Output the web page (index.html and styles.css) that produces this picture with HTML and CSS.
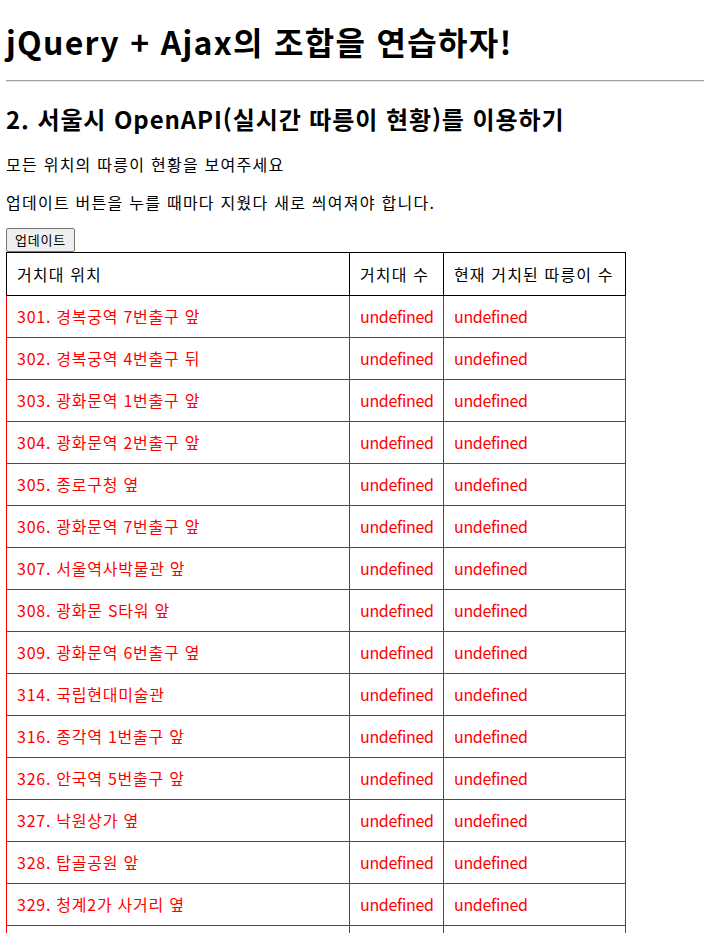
FILE: index.html
```html
<!DOCTYPE html>
<html lang="ko">
<head>
<meta charset="utf-8">
<title>jQuery + Ajax</title>
<link rel="stylesheet" href="styles.css">
</head>
<body>
<h1 class="title">jQuery + Ajax의 조합을 연습하자!</h1>
<hr class="rule">
<h2 class="subtitle">2. 서울시 OpenAPI(실시간 따릉이 현황)를 이용하기</h2>
<p class="desc first">모든 위치의 따릉이 현황을 보여주세요</p>
<p class="desc">업데이트 버튼을 누를 때마다 지웠다 새로 씌여져야 합니다.</p>
<button class="update-btn">업데이트</button>
<table class="bike-table">
  <colgroup>
    <col class="c1"><col class="c2"><col class="c3">
  </colgroup>
  <thead>
    <tr><th>거치대 위치</th><th>거치대 수</th><th>현재 거치된 따릉이 수</th></tr>
  </thead>
  <tbody>
    <tr><td class="loc">301. 경복궁역 7번출구 앞</td><td class="num">undefined</td><td class="num">undefined</td></tr>
    <tr><td class="loc">302. 경복궁역 4번출구 뒤</td><td class="num">undefined</td><td class="num">undefined</td></tr>
    <tr><td class="loc">303. 광화문역 1번출구 앞</td><td class="num">undefined</td><td class="num">undefined</td></tr>
    <tr><td class="loc">304. 광화문역 2번출구 앞</td><td class="num">undefined</td><td class="num">undefined</td></tr>
    <tr><td class="loc">305. 종로구청 옆</td><td class="num">undefined</td><td class="num">undefined</td></tr>
    <tr><td class="loc">306. 광화문역 7번출구 앞</td><td class="num">undefined</td><td class="num">undefined</td></tr>
    <tr><td class="loc">307. 서울역사박물관 앞</td><td class="num">undefined</td><td class="num">undefined</td></tr>
    <tr><td class="loc">308. 광화문 S타워 앞</td><td class="num">undefined</td><td class="num">undefined</td></tr>
    <tr><td class="loc">309. 광화문역 6번출구 옆</td><td class="num">undefined</td><td class="num">undefined</td></tr>
    <tr><td class="loc">314. 국립현대미술관</td><td class="num">undefined</td><td class="num">undefined</td></tr>
    <tr><td class="loc">316. 종각역 1번출구 앞</td><td class="num">undefined</td><td class="num">undefined</td></tr>
    <tr><td class="loc">326. 안국역 5번출구 앞</td><td class="num">undefined</td><td class="num">undefined</td></tr>
    <tr><td class="loc">327. 낙원상가 옆</td><td class="num">undefined</td><td class="num">undefined</td></tr>
    <tr><td class="loc">328. 탑골공원 앞</td><td class="num">undefined</td><td class="num">undefined</td></tr>
    <tr><td class="loc">329. 청계2가 사거리 옆</td><td class="num">undefined</td><td class="num">undefined</td></tr>
    <tr><td class="loc">&nbsp;</td><td class="num">&nbsp;</td><td class="num">&nbsp;</td></tr>
  </tbody>
</table>
</body>
</html>
```
FILE: styles.css
```css
html, body {
  margin: 0;
  padding: 0;
  background: #fff;
}
body {
  padding-left: 6px;
  font-family: "Noto Sans CJK KR", "Noto Sans", sans-serif;
  color: #000;
}
.title {
  margin: 20px 0 0;
  font-size: 32px;
  line-height: 42px;
  font-weight: 700;
  letter-spacing: 1.3px;
}
.rule {
  margin: 18px 0 0;
  height: 0;
  border: 0;
  border-top: 1px solid #a0a0a0;
  border-bottom: 1px solid #e6e6e6;
}
.subtitle {
  margin: 21px 0 0;
  font-size: 24px;
  line-height: 32px;
  font-weight: 700;
  letter-spacing: 0.9px;
}
.desc {
  margin: 14px 0 0;
  font-size: 16px;
  line-height: 24px;
  letter-spacing: 1.25px;
}
.desc.first {
  margin-top: 17px;
}
.update-btn {
  display: block;
  margin: 14px 0 0;
  width: 69px;
  height: 24px;
  padding: 0;
  font-family: "Noto Sans CJK KR", "Noto Sans", sans-serif;
  font-size: 13px;
  line-height: 20px;
  letter-spacing: 0.8px;
  color: #000;
  background: #efefef;
  border: 1px solid #767676;
  border-radius: 2px;
}
.bike-table {
  border-collapse: collapse;
  table-layout: fixed;
  width: 619px;
  font-size: 16px;
}
.c1 { width: 343px; }
.c2 { width: 94px; }
.c3 { width: 182px; }
.bike-table th {
  text-align: left;
  font-weight: 400;
  color: #000;
  border: 1px solid #000;
  padding: 0 10px;
  line-height: 42px;
  white-space: nowrap;
  letter-spacing: 1.15px;
}
.bike-table td {
  color: #ff0000;
  border: 1px solid #ff0000;
  padding: 0 10px;
  line-height: 41px;
  white-space: nowrap;
}
.bike-table td.loc {
  letter-spacing: 0.75px;
}
.bike-table td.num {
  letter-spacing: -0.3px;
}
```
